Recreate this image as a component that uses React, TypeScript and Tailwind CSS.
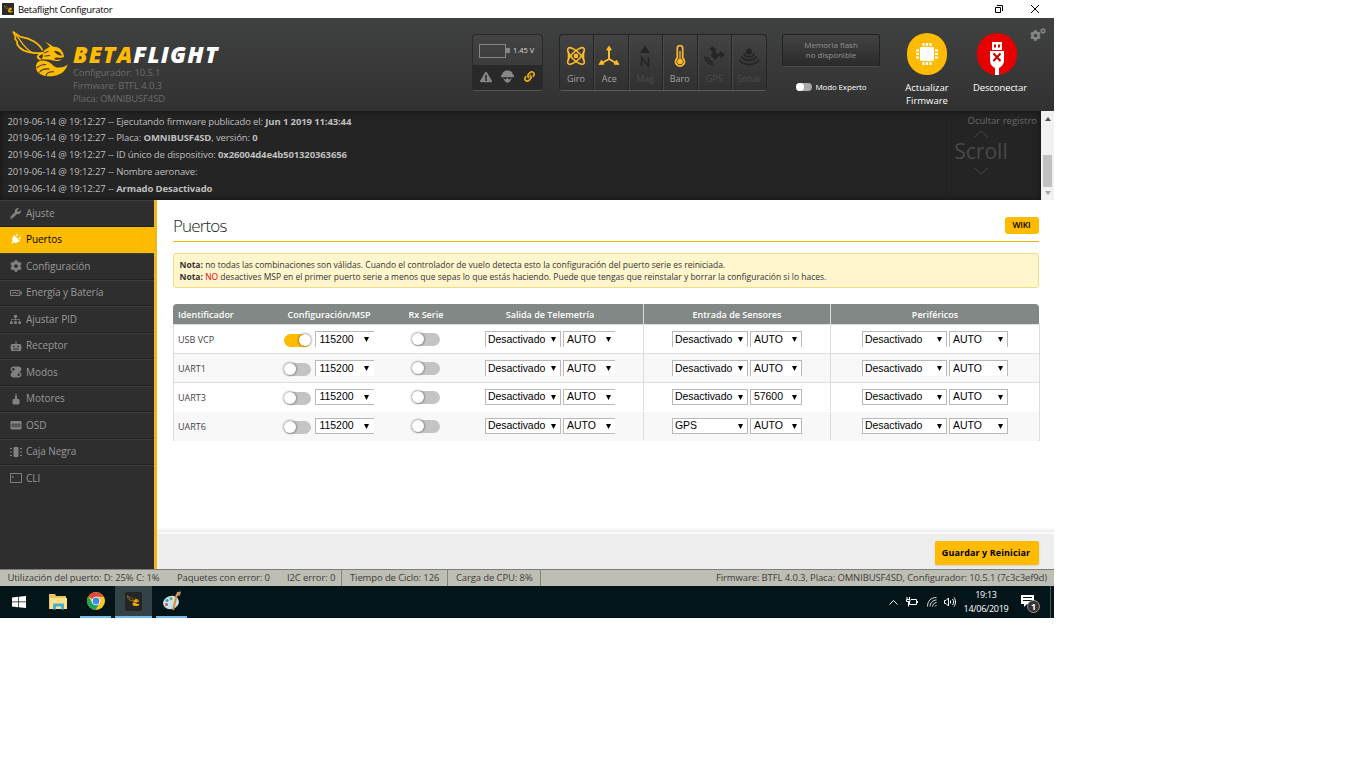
import React from "react";
import clsx from "clsx";
import {
  FaWrench,
  FaPlug,
  FaCog,
  FaSitemap,
  FaExclamationTriangle,
  FaLink,
} from "react-icons/fa";

function BeeLogo({ className }: { className?: string }) {
  return (
    <svg viewBox="36 90 171 141" className={className} fill="none">
      <g stroke="#ffbb00" strokeWidth="5" strokeLinejoin="round" strokeLinecap="round">
        <path d="M40 95 L62 109 C90 112 116 128 127 148" />
        <path d="M40 95 L47 109 L45 114 L52 125 L51 130 C62 152 92 160 128 157" />
        <path d="M49 103 C62 120 72 146 100 158" strokeWidth="3.5" />
        <path d="M128 158 C112 164 108 170 120 176" strokeWidth="6" />
      </g>
      <path
        d="M135 123 L150 132 L160 139 C178 138 190 150 192 169 C186 175 172 168 166 172 C158 178 170 180 186 176 C178 184 160 182 150 178 L124 176 C132 170 126 160 132 150 L150 138 Z"
        fill="#ffbb00"
      />
      <path d="M162 152 C172 150 182 156 186 165 C176 166 168 160 162 152Z" fill="#393b3a" />
      <path d="M131 158 L146 152 M133 167 L150 165" stroke="#393b3a" strokeWidth="3" />
      <path
        d="M112 186 C122 176 140 180 152 188 C160 194 162 200 174 201 C186 202 196 198 203 192 C198 210 184 222 164 226 C140 231 118 224 110 210 C107 202 107 193 112 186Z"
        fill="#ffbb00"
      />
      <path
        d="M110 203 C118 194 126 192 138 192 M118 216 C126 206 136 204 148 206 M138 226 C140 216 150 213 162 214"
        stroke="#393b3a"
        strokeWidth="3.5"
      />
    </svg>
  );
}

function TitleBar() {
  return (
    <div className="flex h-[18px] shrink-0 items-center bg-white pl-[2px]">
      <div className="flex h-[12px] w-[12px] items-center justify-center bg-[#2b2b2b]">
        <BeeLogo className="h-[8px] w-[9px]" />
      </div>
      <span className="ml-[4px] pt-[2px] text-[9.5px] tracking-[-0.3px] text-black">Betaflight Configurator</span>
      <svg className="ml-auto h-[8px] w-[8px]" viewBox="0 0 8 8" fill="none" stroke="#000">
        <path d="M.5 2.5h5v5h-5zM2 .5h5.5V6" />
      </svg>
      <svg className="mr-[15px] ml-[28px] h-[8px] w-[8px]" viewBox="0 0 8 8" fill="none" stroke="#000">
        <path d="M0 0L8 8M8 0L0 8" />
      </svg>
    </div>
  );
}

const sensorIcons: Record<string, React.ReactNode> = {
  Giro: (
    <g fill="none" stroke="currentColor" strokeWidth="1.6">
      <ellipse cx="10" cy="10" rx="11" ry="4.2" transform="rotate(45 10 10)" />
      <ellipse cx="10" cy="10" rx="11" ry="4.2" transform="rotate(-45 10 10)" />
      <circle cx="10" cy="10" r="1.6" fill="currentColor" />
      <path d="M2.5 6v8M17.5 6v8" />
    </g>
  ),
  Ace: (
    <g stroke="currentColor" strokeWidth="2" fill="currentColor">
      <path d="M10 3v10M10 13l-7 4M10 13l7 4" fill="none" />
      <path d="M10 0l2.5 4h-5zM0 18.500l2.500-4.500 2.500 4.200zM20 18.500l-2.500-4.500-2.500 4.200z" strokeWidth=".8" />
    </g>
  ),
  Mag: (
    <g fill="currentColor">
      <path d="M10 -.5l5 7.500H5z" />
      <path d="M6.500 20v-8.500l7 8.500v-9" fill="none" stroke="currentColor" strokeWidth="1.500" />
    </g>
  ),
  Baro: (
    <g fill="none" stroke="currentColor" strokeWidth="1.700">
      <path d="M7.300 12V2.200a2.700 2.700 0 0 1 5.400 0V12a4.500 4.500 0 1 1-5.400 0z" />
      <circle cx="10" cy="15.500" r="2" fill="currentColor" />
      <path d="M10 5v10" strokeWidth="1.300" />
    </g>
  ),
  GPS: (
    <g fill="currentColor">
      <path d="M8.500 0l4 4-3 3-4-4zM14 8l3-3 3.500 4-3 3zM10 5l5 4.500-4 4.500-4.500-5z" />
      <path d="M1 10.500a8 8 0 0 0 8 8M3.800 11a5.500 5.500 0 0 0 5 5" fill="none" stroke="currentColor" strokeWidth="1.800" />
    </g>
  ),
  Sonar: (
    <g fill="none" stroke="currentColor" strokeWidth="1.800">
      <circle cx="10" cy="5.500" r="2.200" fill="currentColor" />
      <path d="M5 7c0 5 10 5 10 0M2.500 10.500c3 5 12 5 15 0M0 14c5 6 15 6 20 0" />
    </g>
  ),
};

const sensors = [
  { name: "Giro", on: true },
  { name: "Ace", on: true },
  { name: "Mag", on: false },
  { name: "Baro", on: true },
  { name: "GPS", on: false },
  { name: "Sonar", on: false },
];

function Header() {
  return (
    <header className="flex h-[93px] shrink-0 items-start bg-linear-to-b from-[#404241] to-[#313131]">
      <div className="flex w-[472px]">
        <BeeLogo className="mt-[12px] ml-[12px] h-[48px] w-[57px]" />
        <div className="ml-[4px] pt-[24px]">
          <div className="text-[23px] leading-[24px] font-extrabold tracking-[1.15px] italic">
            <span className="text-[#ffbb00]">BETA</span>
            <span className="text-white">FLIGHT</span>
          </div>
          <div className="text-[9.5px] leading-[13px] tracking-[-0.15px] text-[#6b6b6b]">
            <p>Configurador: 10.5.1</p>
            <p>Firmware: BTFL 4.0.3</p>
            <p>Placa: OMNIBUSF4SD</p>
          </div>
        </div>
      </div>

      {/* Battery and flight status */}
      <div className="mt-[16px] h-[57px] w-[71px] overflow-hidden rounded-[4px] border border-[#2a2a2a] border-b-[#555] bg-linear-to-b from-[#434343] to-[#353535]">
        <div className="flex h-[30px] items-center pt-px pl-[6px]">
          <div className="h-[14px] w-[27px] border border-[#868686]" />
          <div className="h-[5px] w-[4px] bg-[#868686]" />
          <span className="ml-[3px] text-[7.5px] text-[#dadada]">1.45 V</span>
        </div>
        <div className="flex h-[26px] items-center bg-[#292929] pb-[3px] pl-[7px] text-[#868686]">
          <FaExclamationTriangle size={12} />
          <svg className="ml-[9px] h-[13px] w-[13px]" viewBox="0 0 13 13" fill="currentColor">
            <path d="M1 5.500C1 2 3.500.5 6.500.5S12 2 12 5.500zM0 5h13v2.300H0zM2 8l2.500 1.500L6.500 8l2 1.500L11 8 9 11.500 6.500 13 4 11.500z" />
          </svg>
          <FaLink className="ml-[10px] text-[#e5ae18]" size={11} />
        </div>
      </div>

      <div className="mt-[16px] ml-[16px] flex h-[57px] w-[208px] overflow-hidden rounded-[4px] border border-[#252525] border-b-[#5a5a5a] bg-linear-to-b from-[#434343] to-[#303030]">
        {sensors.map((s) => (
          <div
            key={s.name}
            className={clsx(
              "flex w-[34.500px] shrink-0 flex-col items-center border-r border-r-[#242424] border-l border-l-[#484848] pt-[10px] pr-px text-[9px] first:w-[34px] first:border-l-0 last:border-r-0",
              s.on ? "text-[#ffbb2a]" : "text-[#252525]",
            )}
          >
            <svg
              viewBox="-1 -1 22 22"
              className={clsx("h-[22px] w-[22px]", s.name === "Ace" && "mr-[3px]")}
            >
              {sensorIcons[s.name]}
            </svg>
            <span
              className={clsx(
                "mt-[6px] leading-[12px]",
                s.on ? "text-[#a2a2a2]" : "text-[#4c4c4c]",
                s.name === "Ace" && "mr-[3px]",
              )}
            >
              {s.name}
            </span>
          </div>
        ))}
      </div>

      <div className="mt-[16px] ml-[15px] flex w-[98px] flex-col items-center">
        <div className="flex h-[33px] w-full flex-col items-center rounded-[3px] border border-[#222] border-b-[#4b4b4b] bg-linear-to-b from-[#434343] to-[#2a2a2a] pt-[5px] text-[8px] leading-[9.500px] text-[#929292]">
          <span>Memoria flash</span>
          <span>no disponible</span>
        </div>
        <div className="mt-[14px] flex items-center gap-[4px] text-[8px] leading-[12px] tracking-[-0.15px] text-white">
          <span className="flex h-[8px] w-[16px] rounded-full bg-[#aaa]">
            <span className="h-[8px] w-[8px] rounded-full bg-white" />
          </span>
          Modo Experto
        </div>
      </div>

      <div className="mt-[15px] ml-[12px] flex w-[70px] flex-col items-center text-center text-[9.5px] leading-[13px] text-white">
        <div className="flex h-[42px] w-[40px] items-center justify-center rounded-full bg-[#ffbb00]">
          <svg viewBox="0 0 22 22" className="h-[22px] w-[22px]" fill="#fff">
            <rect x="4" y="4" width="14" height="14" rx="1" />
            <path
              d="M7.500 0v3M11 0v3M14.500 0v3M7.500 19V22M11 19V22M14.500 19V22M0 7.500h3M0 11h3M0 14.500h3M19 7.500H22M19 11H22M19 14.500H22"
              stroke="#fff"
              strokeWidth="2.200"
            />
          </svg>
        </div>
        <div className="mt-[6px]">
          Actualizar
          <br />
          Firmware
        </div>
      </div>

      <div className="mt-[15px] ml-[2px] flex w-[66px] flex-col items-center text-[9.5px] leading-[13px] tracking-[-0.1px] text-white">
        <div className="flex h-[42px] w-[40px] items-end justify-center rounded-full bg-[#e60000]">
          <svg viewBox="0 0 16 34" className="h-[34px] w-[16px]">
            <path d="M3 1h10v8H3zM1 10h14v9c0 5-3 7-5 8v7H6v-7c-2-1-5-3-5-8z" fill="#fff" />
            <path d="M5 3.500h2v3H5zM9 3.500h2v3H9z" fill="#e60000" />
            <path d="M4.500 12.500l7 7.500M11.500 12.500l-7 7.500" stroke="#c00000" strokeWidth="2" />
          </svg>
        </div>
        <span className="mt-[6px] ml-[6px]">Desconectar</span>
      </div>
      <div className="mt-[10px] flex text-[#868686]">
        <FaCog size={11} className="mt-[2px]" />
        <FaCog size={6} className="-ml-px" />
      </div>
    </header>
  );
}

const logLines = [
  ["2019-06-14 @ 19:12:27 -- Ejecutando firmware publicado el: ", "Jun 1 2019 11:43:44", ""],
  ["2019-06-14 @ 19:12:27 -- Placa: ", "OMNIBUSF4SD", ", versión: "],
  ["2019-06-14 @ 19:12:27 -- ID único de dispositivo: ", "0x26004d4e4b501320363656", ""],
  ["2019-06-14 @ 19:12:27 -- Nombre aeronave: ", "", ""],
  ["2019-06-14 @ 19:12:27 -- ", "Armado Desactivado", ""],
];

function LogPanel() {
  return (
    <div className="flex h-[89px] shrink-0 bg-[#242424]">
      <div className="flex flex-1 shadow-[inset_0_0_6px_#111]">
        <div className="flex-1 pt-[2.5px] pl-[7.5px] text-[9.5px] leading-[16.8px] tracking-[-0.12px] text-[#bfbfbf]">
          {logLines.map(([pre, strong, post], i) => (
            <p key={i} className="whitespace-pre">
              {pre}
              <strong>{strong}</strong>
              {post}
              {i === 1 && <strong>0</strong>}
            </p>
          ))}
        </div>
        <div className="flex w-[95px] flex-col border-l border-[#202020] pt-[3px] pr-[4px] text-right text-[9.5px] leading-[13px] text-[#6a6a6a]">
          Ocultar registro
          <div className="flex w-[68px] flex-col items-center text-[#484848]">
            <svg viewBox="0 0 16 8" className="mt-[3px] h-[8px] w-[16px]" fill="none" stroke="currentColor">
              <path d="M1 7.500L8 1l7 6.500" />
            </svg>
            <span className="text-[21px] leading-[27px]">Scroll</span>
            <svg viewBox="0 0 16 8" className="mt-[2px] h-[8px] w-[16px]" fill="none" stroke="currentColor">
              <path d="M1 .5L8 7l7-6.500" />
            </svg>
          </div>
        </div>
      </div>
      <div className="flex w-[13px] flex-col items-center bg-[#f1f1f1] pt-[6px]">
        <svg viewBox="0 0 6 4" className="h-[4px] w-[6px]">
          <path d="M0 4l3-4 3 4z" fill="#505050" />
        </svg>
        <div className="mt-[34px] h-[32px] w-[9px] bg-[#c1c1c1]" />
        <svg viewBox="0 0 6 4" className="mt-[4px] h-[4px] w-[6px]">
          <path d="M0 0l3 4 3-4z" fill="#a3a3a3" />
        </svg>
      </div>
    </div>
  );
}

const boxIcon = (d: React.ReactNode) => (
  <svg viewBox="0 0 12 12" className="h-[12px] w-[12px]" fill="none" stroke="currentColor">
    {d}
  </svg>
);

const tabs = [
  { label: "Ajuste", icon: <FaWrench size={11} /> },
  { label: "Puertos", icon: <FaPlug size={11} className="rotate-45" />, active: true },
  { label: "Configuración", icon: <FaCog size={12} /> },
  {
    label: "Energía y Batería",
    icon: boxIcon(<path d="M.5 3.500h9.500v5H.5zM10.500 5h1v2h-1M2 6h2l1-1 1.500 2 1-1h1" />),
  },
  { label: "Ajustar PID", icon: <FaSitemap size={11} /> },
  {
    label: "Receptor",
    icon: boxIcon(
      <>
        <path d="M1.500 4.500h9v6h-9zM6 1v3M0 6v3M12 6v3" fill="currentColor" />
        <path d="M3 6.500h2M7 6.500h2M3 9h6" stroke="#2e2e2e" />
      </>,
    ),
  },
  {
    label: "Modos",
    icon: boxIcon(
      <>
        <rect x="1" y="1" width="10" height="4.500" rx="2.200" fill="currentColor" />
        <rect x="1" y="6.500" width="10" height="4.500" rx="2.200" fill="currentColor" />
        <circle cx="3.300" cy="3.200" r="1.200" fill="#2e2e2e" stroke="none" />
        <circle cx="8.700" cy="8.800" r="1.200" fill="#2e2e2e" stroke="none" />
      </>,
    ),
  },
  {
    label: "Motores",
    icon: boxIcon(<path d="M6 .5v3M5.500 3h1v3h-1zM3 6.500h6v4.500H3z" fill="currentColor" />),
  },
  {
    label: "OSD",
    icon: boxIcon(
      <>
        <path d="M1 2.500h10v7.500H1z" fill="currentColor" />
        <path d="M2 5h2v2.500H2zM5 5h2v2.500H5zM8 5h2v2.500H8z" stroke="#2e2e2e" strokeWidth=".7" />
      </>,
    ),
  },
  {
    label: "Caja Negra",
    icon: boxIcon(
      <>
        <path d="M4 1.500h4v9H4z" fill="currentColor" />
        <path d="M0 2.500h2M0 6h2M0 9.500h2M10 2.500h2M10 6h2M10 9.500h2" />
      </>,
    ),
  },
  { label: "CLI", icon: boxIcon(<path d="M.5 1.500h11v9H.5zM2 4l1.500 1L2 6" />) },
];

function Sidebar() {
  return (
    <nav className="w-[157px] shrink-0 border-r-[3px] border-[#f0b71d] bg-[#2e2e2e]">
      {tabs.map((t) => (
        <div
          key={t.label}
          className={clsx(
            "flex h-[26.5px] items-center border-t pl-[10px] text-[10px] tracking-[-0.05px]",
            t.active
              ? "border-t-[#ffbb00] bg-[#ffbb00] pb-px text-black"
              : "border-b border-t-[#3d3d3d] border-b-[#202020] text-[#999] last:border-b-0 last:pb-px",
          )}
        >
          <span className={clsx("flex w-[16px] items-center", t.active ? "text-white" : "text-[#818181]")}>
            {t.icon}
          </span>
          {t.label}
        </div>
      ))}
    </nav>
  );
}

function Toggle({ on, className }: { on?: boolean; className?: string }) {
  return (
    <span
      className={clsx(
        "flex h-[13px] items-center rounded-full",
        on ? "justify-end bg-[#ffbb00]" : "bg-[#c4c4c4]",
        className,
      )}
    >
      <span className="h-[12px] w-[12px] rounded-full bg-white shadow-[0_0_2px_1px_rgba(0,0,0,0.3)]" />
    </span>
  );
}

function Select({ value, className }: { value: string; className?: string }) {
  return (
    <span
      className={clsx(
        "flex h-[16px] items-center justify-between border-[#b9b9b9] bg-white pr-[4.5px] font-['Liberation_Sans'] text-[10.5px] tracking-[-0.05px] text-black",
        className,
      )}
    >
      {value}
      <svg viewBox="0 0 5 5" className="h-[5px] w-[5px]">
        <path d="M0 0h5L2.500 5z" />
      </svg>
    </span>
  );
}

const ports = [
  { id: "USB VCP", msp: true, sensor: "Desactivado", baud: "AUTO" },
  { id: "UART1", msp: false, sensor: "Desactivado", baud: "AUTO" },
  { id: "UART3", msp: false, sensor: "Desactivado", baud: "57600" },
  { id: "UART6", msp: false, sensor: "GPS", baud: "AUTO" },
];

function PortsTable() {
  return (
    <div className="mt-[16px] w-[867px]">
      <div className="grid h-[20px] w-[866px] grid-cols-[90px_132px_62px_187px_187px_208px] overflow-hidden rounded-t-[4px] bg-[#828885] text-center text-[9px] leading-[21px] font-semibold text-white">
        <span className="pl-[5px] text-left">Identificador</span>
        <span>Configuración/MSP</span>
        <span>Rx Serie</span>
        <span className="border-r border-[#ddd]">Salida de Telemetría</span>
        <span className="border-r border-[#ddd]">Entrada de Sensores</span>
        <span>Periféricos</span>
      </div>
      {ports.map((p, i) => {
        // the first two rows lose the lower edge of their selects
        const edge = i < 2 ? "border-t" : "border-y";
        return (
          <div
            key={p.id}
            className={clsx(
              "grid grid-cols-[89px_131px_63px_187px_187px_208px] border-x border-[#ddd] text-[9px] text-[#444]",
              i % 2 ? "bg-[#f8f8f8]" : "bg-white",
              i === 0 ? "h-[30px] border-t" : "h-[29px]",
              i < 2 ? "border-b" : "pb-px",
            )}
          >
            <span className="flex items-center pt-px pl-[4px]">{p.id}</span>
            <span className="flex items-center justify-center gap-[4px]">
              <Toggle on={p.msp} className="mt-[2px] w-[27px]" />
              <Select value="115200" className={clsx("w-[59px] border-l pl-[4px]", edge)} />
            </span>
            <span className="flex items-center justify-center">
              <Toggle className="w-[28px]" />
            </span>
            <span className="flex items-center justify-center gap-[2px] border-r border-[#ddd]">
              <Select value="Desactivado" className={clsx("w-[76px] border-x pl-[2px]", edge)} />
              <Select value="AUTO" className={clsx("w-[52px] border-l pl-[3px]", edge)} />
            </span>
            <span className="flex items-center justify-center gap-[2px] border-r border-[#ddd]">
              <Select value={p.sensor} className={clsx("w-[76px] border-x pl-[2px]", edge)} />
              <Select value={p.baud} className={clsx("w-[52px] border-x pl-[3px]", edge)} />
            </span>
            <span className="flex items-center justify-center gap-[2px]">
              <Select value="Desactivado" className={clsx("w-[85px] border-x pl-[2px]", edge)} />
              <Select value="AUTO" className={clsx("w-[59px] border-x pl-[3px]", edge)} />
            </span>
          </div>
        );
      })}
    </div>
  );
}

function StatusBar() {
  return (
    <footer className="flex h-[17px] shrink-0 items-center border-t border-[#7d7d78] bg-[#bfbeb5] pl-[7.5px] text-[9.5px] leading-[16px] tracking-[-0.12px] whitespace-nowrap text-[#3d3d3d]">
      <span className="w-[169.5px]">Utilización del puerto: D: 25% C: 1%</span>
      <span className="w-[110px]">Paquetes con error: 0</span>
      <span className="h-full w-[55px] border-r border-[#85857f]">I2C error: 0</span>
      <span className="h-full w-[106px] border-r border-[#85857f] pl-[8px]">Tiempo de Ciclo: 126</span>
      <span className="h-full w-[93px] border-r border-[#85857f] pl-[8px]">Carga de CPU: 8%</span>
      <span className="mr-[7px] ml-auto">
        Firmware: BTFL 4.0.3, Placa: OMNIBUSF4SD, Configurador: 10.5.1 (7c3c3ef9d)
      </span>
    </footer>
  );
}

function Taskbar() {
  return (
    <div className="flex h-[32px] shrink-0 items-stretch bg-[#04151a] text-white">
      <div className="flex w-[38px] items-center justify-center">
        <svg viewBox="0 0 14 12" className="mr-px h-[12px] w-[14px]" fill="#fff">
          <path d="M0 1.500l6-.7v4.800H0zM6.700.7L14 0v5.600H6.700zM0 6.300h6v4.900l-6-.7zM6.700 6.300H14V12l-7.300-.7z" />
        </svg>
      </div>
      <div className="flex w-[42px] items-center justify-center pr-[3px]">
        <svg viewBox="0 0 18 16" className="h-[16px] w-[18px]">
          <path d="M0 0h6l1 2h10v13H0z" fill="#e8c45c" />
          <path d="M1 4h17v11H1z" fill="#fde28b" />
          <path d="M4 15.500V9.500h11v6h-3v-3H7v3z" fill="#45b0d3" />
        </svg>
      </div>
      <div className="flex w-[31px] items-center justify-center border-b-2 border-[#76b9ed]">
        <svg viewBox="0 0 18 18" className="h-[18px] w-[18px]">
          <circle cx="9" cy="9" r="9" fill="#fbc926" />
          <path d="M9 9L1.200 4.500A9 9 0 0 1 16.800 4.800H9z" fill="#de4b3d" />
          <path d="M1.200 4.500A9 9 0 0 0 8.500 18L12.500 11 5.500 11z" fill="#1fa25b" />
          <circle cx="9" cy="9" r="4.300" fill="#fff" />
          <circle cx="9" cy="9" r="3.400" fill="#4285f4" />
        </svg>
      </div>
      <div className="ml-[4px] flex w-[37px] items-center justify-center border-b-2 border-[#76b9ed] bg-[#334247]">
        <div className="flex h-[19px] w-[17px] items-center justify-center rounded-[2px] bg-[#252525]">
          <BeeLogo className="h-[12px] w-[13px]" />
        </div>
      </div>
      <div className="ml-[4px] flex w-[31px] items-center justify-center border-b-2 border-[#76b9ed]">
        <svg viewBox="0 0 18 20" className="h-[20px] w-[18px]">
          <ellipse cx="8" cy="11.500" rx="8" ry="6.500" fill="#c9e2ef" transform="rotate(-15 8 11.500)" />
          <circle cx="4" cy="9.500" r="1.500" fill="#3c90cf" />
          <circle cx="8" cy="7.500" r="1.500" fill="#58b34a" />
          <circle cx="3.500" cy="13.500" r="1.500" fill="#d94f3a" />
          <path d="M14 3L10 19" stroke="#d78b34" strokeWidth="2" />
          <path d="M13 5l1-4 4-.500-1 4z" fill="#c89461" />
        </svg>
      </div>

      <div className="ml-auto flex items-center">
        <svg viewBox="0 0 9 6" className="h-[6px] w-[9px]" fill="none" stroke="#fff">
          <path d="M.5 5.500l4-4 4 4" />
        </svg>
        <svg viewBox="0 0 12 10" className="ml-[8px] h-[10px] w-[12px]" fill="none" stroke="#fff">
          <path d="M5 2.500h5.500v5H3.500v-3M1 0v2M3.500 0v2M.5 2.500h3.500v2H.5zM2.500 5v4.500M11.500 4v2" />
        </svg>
        <svg viewBox="0 0 10 10" className="ml-[9px] h-[10px] w-[10px]" fill="none" stroke="#ddd">
          <path d="M.5 9.500C.5 4 4 .5 9.500.5M3 9.500C3 6 6 3 9.500 3M5.500 9.500c0-2 2-4 4-4M8 9.500l1.500-1.500" />
        </svg>
        <svg viewBox="0 0 12 10" className="ml-[7px] h-[10px] w-[12px]" fill="none" stroke="#fff">
          <path d="M.5 3.500H2L4.500 1v8L2 6.500H.5zM6.500 3.500v3M8.500 2c1.500 2 1.500 4 0 6M10 .5c2 3 2 6 0 9" />
        </svg>
        <div className="ml-[7px] w-[46px] text-center text-[9px] leading-[14px] tracking-[-0.3px]">
          <p>19:13</p>
          <p>14/06/2019</p>
        </div>
        <div className="relative ml-[12px] h-[16px] w-[20px]">
          <svg viewBox="0 0 14 14" className="h-[14px] w-[14px]">
            <path d="M0 1h13v9H6l-3 3v-3H0z" fill="#fff" />
            <path d="M2 3.500h9M2 6.500h9" stroke="#04151a" />
          </svg>
          <span className="absolute top-[6px] left-[6px] flex h-[13px] w-[13px] items-center justify-center rounded-full border border-[#999] bg-[#333] text-[9px] font-bold">
            1
          </span>
        </div>
        <div className="ml-[9px] h-full w-[4px] border-l border-[#46545a]" />
      </div>
    </div>
  );
}

export default function App() {
  return (
    <div className="h-[768px] w-[1366px] overflow-hidden bg-white font-['Open_Sans',sans-serif]">
      <div className="flex h-[618px] w-[1054px] flex-col">
        <TitleBar />
        <Header />
        <LogPanel />
        <div className="flex h-[369px] shrink-0">
          <Sidebar />
          <main className="flex w-[897px] flex-col">
            <div className="flex-1 pr-[15px] pl-[16px]">
              <div className="flex h-[42px] items-center justify-between border-b border-b-[#e8b800] pt-[9px]">
                <h1 className="pt-px text-[17px] font-light tracking-[-0.85px] text-[#222]">Puertos</h1>
                <button className="h-[17px] w-[34px] rounded-[3px] bg-[#ffbb00] pr-px text-[8.5px] font-semibold tracking-[-0.15px] text-black">
                  WIKI
                </button>
              </div>
              <div className="mt-[11px] h-[35px] rounded-[3px] border border-[#f0dc82] bg-[#fff6cd] pt-[5px] pl-[5.5px] text-[8.5px] leading-[12px] whitespace-nowrap text-[#333]">
                <p>
                  <strong>Nota:</strong> no todas las combinaciones son válidas. Cuando el controlador de vuelo
                  detecta esto la configuración del puerto serie es reiniciada.
                </p>
                <p>
                  <strong>Nota:</strong> <span className="text-red-600">NO</span> desactives MSP en el primer
                  puerto serie a menos que sepas lo que estás haciendo. Puede que tengas que reinstalar y borrar
                  la configuración si lo haces.
                </p>
              </div>
              <PortsTable />
            </div>
            <div className="h-[4px] bg-linear-to-b from-[#fbfbfb] to-[#ececec]" />
            <div className="flex h-[37px] items-center justify-end border-t-2 border-[#fafafa] bg-[#eee] pt-[3px] pr-[15px]">
              <button className="h-[24px] w-[104px] rounded-[2px] bg-[#ffbb00] pr-[2px] text-[9px] font-bold tracking-[0.1px] text-black shadow-sm">
                Guardar y Reiniciar
              </button>
            </div>
          </main>
        </div>
        <StatusBar />
        <Taskbar />
      </div>
    </div>
  );
}
